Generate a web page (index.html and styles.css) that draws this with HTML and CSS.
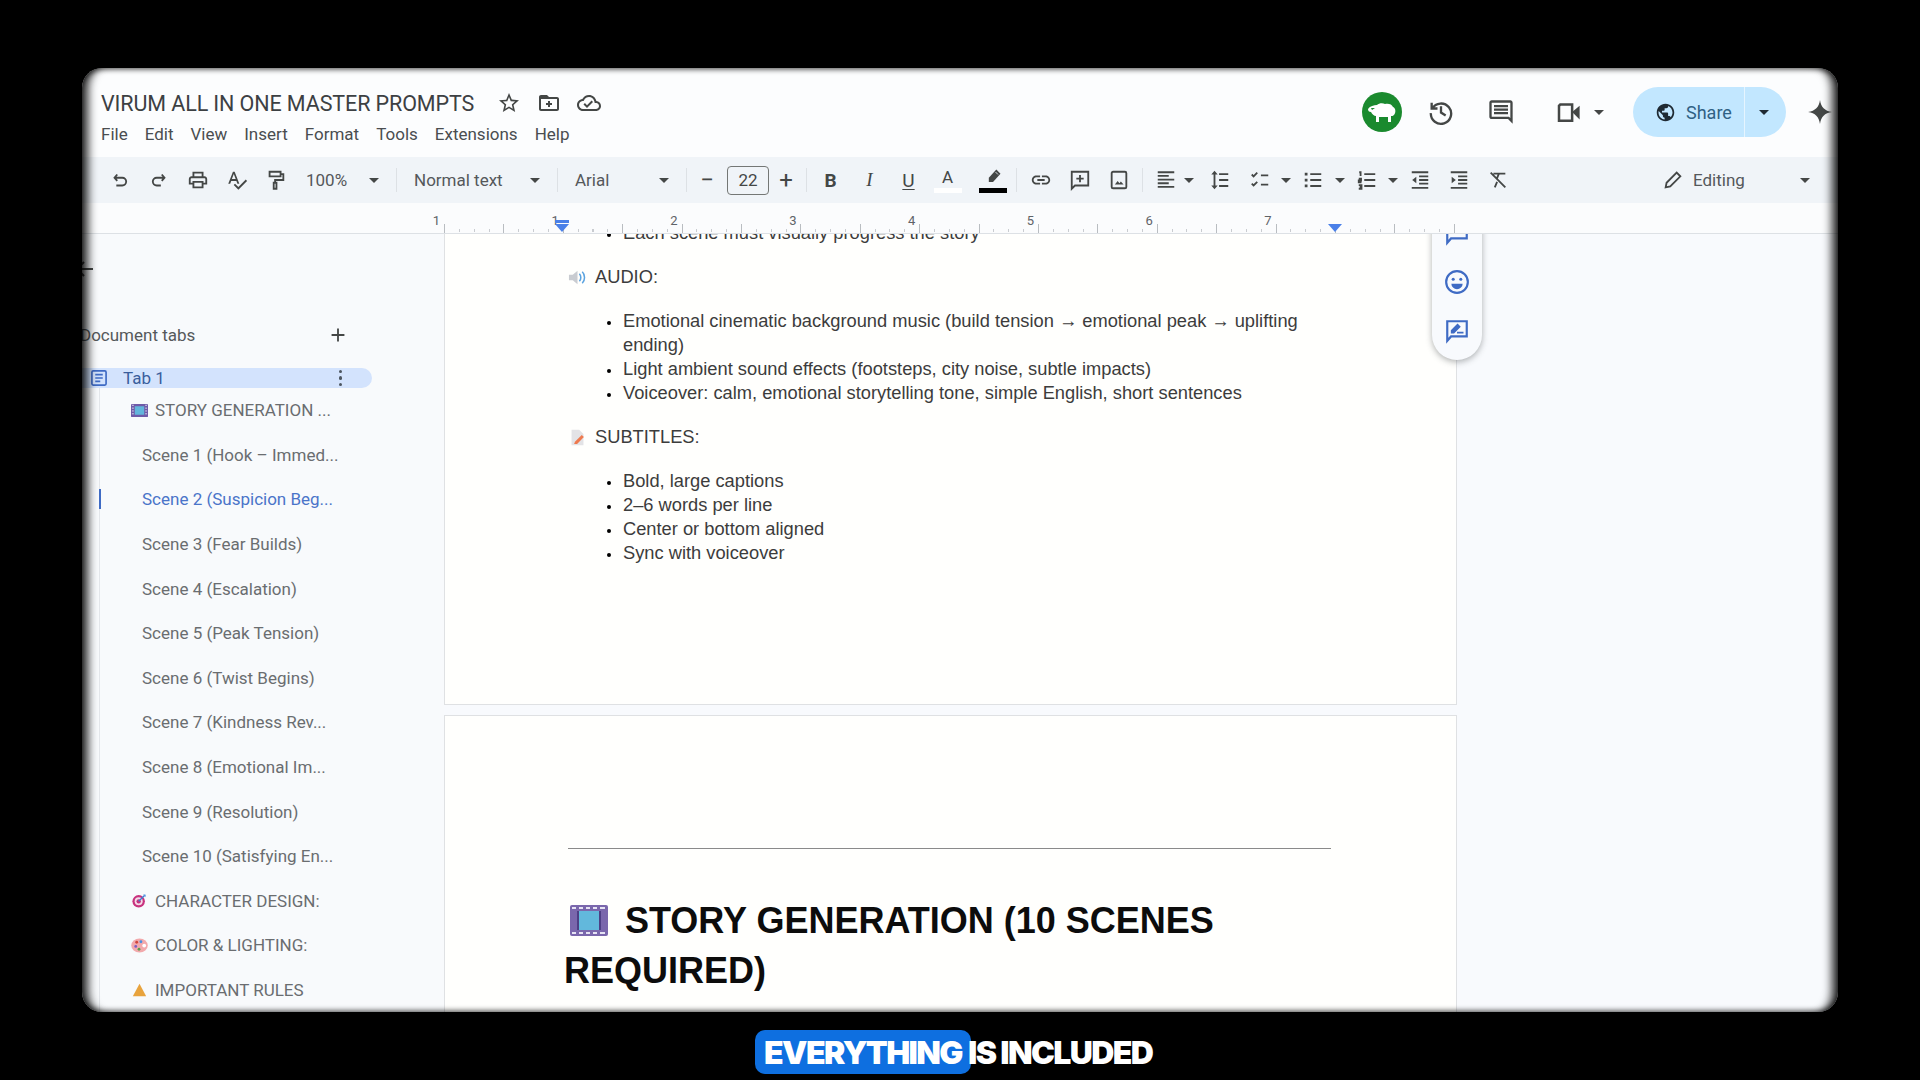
FILE: index.html
```html
<!DOCTYPE html>
<html lang="en">
<head>
  <meta charset="UTF-8" />
  <title>VIRUM ALL IN ONE MASTER PROMPTS</title>
  <link rel="stylesheet" href="styles.css">
</head>
<body>
  <div class="frame">
    <!-- title + menus -->
    <header class="head">
      <div class="head-left">
        <div class="title-row">
          <span class="doc-title">VIRUM ALL IN ONE MASTER PROMPTS</span>
          <svg class="ic title-ic" viewBox="0 0 24 24"><path class="f" d="M22 9.24l-7.19-.62L12 2 9.19 8.63 2 9.24l5.46 4.73L5.82 21 12 17.27 18.18 21l-1.63-7.03L22 9.24zM12 15.4l-3.76 2.27 1-4.28-3.32-2.88 4.38-.38L12 6.1l1.71 4.04 4.38.38-3.32 2.88 1 4.28L12 15.4z"/></svg>
          <svg class="ic title-ic" viewBox="0 0 24 24"><path class="f" d="M20 6h-8l-2-2H4c-1.11 0-1.99.89-1.99 2L2 18c0 1.11.89 2 2 2h16c1.11 0 2-.89 2-2V8c0-1.11-.89-2-2-2zm0 12H4V8h16v10z"/><path class="f" d="M11 10h2v2h2v2h-2v2h-2v-2H9v-2h2z"/></svg>
          <svg class="ic title-ic" viewBox="0 0 24 24"><path class="f" d="M19.35 10.04C18.67 6.59 15.64 4 12 4 9.11 4 6.6 5.64 5.35 8.04 2.34 8.36 0 10.91 0 14c0 3.31 2.69 6 6 6h13c2.76 0 5-2.24 5-5 0-2.64-2.05-4.78-4.65-4.96zM19 18H6c-2.21 0-4-1.79-4-4 0-2.05 1.53-3.76 3.56-3.97l1.07-.11.5-.95C8.08 7.14 9.94 6 12 6c2.62 0 4.88 1.86 5.39 4.43l.3 1.5 1.53.11c1.56.1 2.78 1.41 2.78 2.96 0 1.65-1.35 3-3 3zm-9-3.82l-2.09-2.09L6.5 13.5 10 17l6.01-6.01-1.41-1.41z"/></svg>
        </div>
        <nav class="menu">
          <span>File</span><span>Edit</span><span>View</span><span>Insert</span><span>Format</span><span>Tools</span><span>Extensions</span><span>Help</span>
        </nav>
      </div>
      <div class="head-right">
        <div class="avatar">
          <svg viewBox="0 0 40 40"><path fill="#fff" d="M6 17c2-3 6-4 9-4 2-2 6-2 8-1 3-1 7 0 8 3 3 1 3 6 1 8-1 1-2 1-3 1v6h-3v-5h-9v5h-3v-6c-2 0-4-2-5-4-2 0-3-1-3-3z"/><path fill="#1a8a2e" d="M9 16h4l-3 2z"/></svg>
        </div>
        <svg class="ic head-ic ic-history" viewBox="0 0 24 24"><path class="s" d="M4 4v5h5M4.5 9A8.7 8.7 0 1 1 3.3 13M12 7v5.5l4 2.5"/></svg>
        <svg class="ic head-ic ic-chat" viewBox="0 0 24 24"><path class="f" d="M21.99 4c0-1.1-.89-2-1.99-2H4c-1.1 0-2 .9-2 2v12c0 1.1.9 2 2 2h14l4 4-.01-18zM20 4v13.17L18.83 16H4V4h16zM6 12h12v2H6zm0-3h12v2H6zm0-3h12v2H6z"/></svg>
        <svg class="ic head-ic ic-video" viewBox="0 0 24 24"><path class="s" d="M5 6h9.5v13H4V7z"/><path class="f" d="M14.5 12l6-5v11z"/></svg>
        <span class="caret meet-caret"></span>
        <div class="share">
          <div class="share-main">
            <svg class="ic globe" viewBox="0 0 24 24"><path fill="#1f2a33" d="M12 2C6.48 2 2 6.48 2 12s4.48 10 10 10 10-4.48 10-10S17.52 2 12 2zm-1 17.93c-3.95-.49-7-3.85-7-7.93 0-.62.08-1.21.21-1.79L9 15v1c0 1.1.9 2 2 2v1.93zm6.9-2.54c-.26-.81-1-1.39-1.9-1.39h-1v-3c0-.55-.45-1-1-1H8v-2h2c.55 0 1-.45 1-1V7h2c1.1 0 2-.9 2-2v-.41c2.93 1.19 5 4.06 5 7.41 0 2.08-.8 3.97-2.1 5.39z"/></svg>
            Share
          </div>
          <div class="share-more"><span class="caret dark"></span></div>
        </div>
        <svg class="ic spark" viewBox="0 0 24 24"><path class="f" d="M12 1c.9 6.6 4.4 10.100 11 11-6.600.9-10.100 4.400-11 11-.9-6.600-4.400-10.100-11-11 6.600-.9 10.100-4.400 11-11z"/></svg>
      </div>
    </header>

    <!-- toolbar -->
    <div class="toolbar">
      <span class="btn"><svg class="ic" viewBox="0 0 24 24"><path class="s" d="M9 6L6 9.500 9 13M6 9.500h8.500a4 4 0 0 1 0 8.500H8"/></svg></span>
      <span class="btn"><svg class="ic" viewBox="0 0 24 24"><path class="s" d="M15 6l3 3.500L15 13M18 9.500H9.500a4 4 0 0 0 0 8.500H14"/></svg></span>
      <span class="btn"><svg class="ic" viewBox="0 0 24 24"><path class="f" d="M19 8h-1V3H6v5H5c-1.660 0-3 1.340-3 3v6h4v4h12v-4h4v-6c0-1.660-1.340-3-3-3zM8 5h8v3H8V5zm8 12v2H8v-4h8v2zm2-2v-2H6v2H4v-4c0-.55.45-1 1-1h14c.55 0 1 .45 1 1v4h-2z"/></svg></span>
      <span class="btn"><svg class="ic" viewBox="0 0 24 24"><path class="f" d="M12.450 16h2.090L9.430 3H7.570L2.460 16h2.090l1.120-3h5.640l1.140 3zm-6.020-5L8.500 5.480 10.570 11H6.430zm15.160.59l-8.090 8.090L9.830 16l-1.410 1.410 5.090 5.090L23 13l-1.410-1.410z"/></svg></span>
      <span class="btn"><svg class="ic" viewBox="0 0 24 24"><path class="s" d="M5 3h12v5H5zM17 5.500h3V12h-9v3M9.500 15h3v6.500h-3z"/></svg></span>
      <span class="sel sel-zoom"><span>100%</span><span class="caret"></span></span>
      <span class="sep"></span>
      <span class="sel sel-style"><span>Normal text</span><span class="caret"></span></span>
      <span class="sep"></span>
      <span class="sel sel-font"><span>Arial</span><span class="caret"></span></span>
      <span class="sep"></span>
      <span class="btn w32 sign">−</span>
      <span class="size-box">22</span>
      <span class="btn w32 sign">+</span>
      <span class="sep"></span>
      <span class="btn fmt fmt-b">B</span>
      <span class="btn fmt fmt-i">I</span>
      <span class="btn fmt fmt-u">U</span>
      <span class="btn color-btn"><span class="fmt-a">A</span><span class="swatch white"></span></span>
      <span class="btn color-btn hl"><svg class="ic pen" viewBox="0 0 24 24"><path class="f" d="M16 3l5 5-9 10H7v-5z"/><path d="M15 6l3 3" stroke="#f0f4f8" stroke-width="1"/></svg><span class="swatch black"></span></span>
      <span class="sep"></span>
      <span class="btn"><svg class="ic" viewBox="0 0 24 24"><path class="f" d="M3.900 12c0-1.710 1.390-3.100 3.100-3.100h4V7H7c-2.760 0-5 2.240-5 5s2.240 5 5 5h4v-1.900H7c-1.710 0-3.100-1.390-3.100-3.100zM8 13h8v-2H8v2zm9-6h-4v1.900h4c1.710 0 3.100 1.390 3.100 3.100s-1.390 3.100-3.100 3.100h-4V17h4c2.760 0 5-2.240 5-5s-2.240-5-5-5z"/></svg></span>
      <span class="btn"><svg class="ic" viewBox="0 0 24 24"><path class="s" d="M3 3h18v15H6.500L3 21.500zM12 6.500v8M8 10.500h8"/></svg></span>
      <span class="btn"><svg class="ic" viewBox="0 0 24 24"><path class="s" d="M5.500 3h13a1.500 1.500 0 0 1 1.500 1.500v15a1.500 1.500 0 0 1-1.500 1.500h-13A1.500 1.500 0 0 1 4 19.500v-15A1.500 1.500 0 0 1 5.500 3z"/><path class="f" d="M7.500 17l3-4 2 2.500 1.500-2 3 3.500z"/></svg></span>
      <span class="sep"></span>
      <span class="btn w38"><svg class="ic" viewBox="0 0 24 24"><path class="s" d="M3 3.500h18M3 7.500h12M3 11.500h18M3 15.500h12M3 19.500h18"/></svg></span>
      <span class="caret tb-caret"></span>
      <span class="btn line-sp"><svg class="ic" viewBox="0 0 24 24"><path class="s" d="M11 5.500h10M11 12h10M11 18.500h10M6 5v14"/><path class="f" d="M6 2l3.500 4h-7zM6 22l3.500-4h-7z"/></svg></span>
      <span class="btn w42"><svg class="ic" viewBox="0 0 24 24"><path class="s" d="M3 6l2 2 4-4M3 16l2 2 4-4M13 7h8M13 17h8"/></svg></span>
      <span class="caret tb-caret c10"></span>
      <span class="btn w44"><svg class="ic" viewBox="0 0 24 24"><path class="s" d="M9 5.500h12M9 12h12M9 18.500h12"/><path class="f" d="M3 4h3v3H3zM3 10.500h3v3H3zM3 17h3v3H3z"/></svg></span>
      <span class="caret tb-caret c10"></span>
      <span class="btn w44"><svg class="ic" viewBox="0 0 24 24"><path class="s" d="M9 5.500h12M9 12h12M9 18.500h12M3.500 3.500h1.500v4M3 10.500h2.500v2H3v2h3M3 17.500h3v4H3M4 19.500h2"/></svg></span>
      <span class="caret tb-caret"></span>
      <span class="btn w46"><svg class="ic" viewBox="0 0 24 24"><path class="s" d="M3 3.500h18M11 8h10M11 12h10M11 16h10M3 20.500h18"/><path class="f" d="M8 8.500v7L3.500 12z"/></svg></span>
      <span class="btn w32"><svg class="ic" viewBox="0 0 24 24"><path class="s" d="M3 3.500h18M11 8h10M11 12h10M11 16h10M3 20.500h18"/><path class="f" d="M4 8.500v7L8.500 12z"/></svg></span>
      <span class="btn w46"><svg class="ic" viewBox="0 0 24 24"><path class="s" d="M4 4l16 16M7 5h13M13 5l-2 5M11 14l-2.500 6"/></svg></span>
      <span class="editing">
        <svg class="ic" viewBox="0 0 24 24"><path class="s" d="M4 20l1-5L16 4l4 4L9 19z"/></svg>
        <span class="editing-text">Editing</span>
        <span class="caret"></span>
      </span>
    </div>

    <!-- ruler -->
    <div class="ruler">
      <div class="ruler-nums">
        <span>1</span><span class="zero"></span><span>1</span><span>2</span><span>3</span><span>4</span><span>5</span><span>6</span><span>7</span>
      </div>
      <div class="ticks"></div>
      <span class="marker marker-left"></span>
      <span class="marker marker-right"></span>
    </div>

    <div class="main">
      <aside class="sidebar">
        <svg class="ic back" viewBox="0 0 24 24"><path class="s" d="M20 12H4M11 5l-7 7 7 7"/></svg>
        <div class="tabs-head">
          <span>Document tabs</span>
          <svg class="ic" viewBox="0 0 24 24"><path class="s" d="M12 5v14M5 12h14"/></svg>
        </div>
        <div class="tab-pill">
          <svg class="ic tab-doc" viewBox="0 0 24 24"><path class="b" d="M5 3.500h14A1.500 1.500 0 0 1 20.500 5v14a1.500 1.500 0 0 1-1.500 1.500H5A1.500 1.500 0 0 1 3.500 19V5A1.500 1.500 0 0 1 5 3.500zM7.500 8h9M7.500 12h9M7.500 16h6"/></svg>
          <span class="tab-name">Tab 1</span>
          <span class="dots"><i></i><i></i><i></i></span>
        </div>
        <ul class="outline">
          <li class="lvl1">
            <svg class="emoji" viewBox="0 0 18 14"><rect width="18" height="14" rx="1" fill="#6f5aa8"/><rect x="4" y="2.500" width="10" height="9" fill="#62b5dc"/><path d="M1 1.500h2M1 4.500h2M1 7.500h2M1 10.500h2M15 1.500h2M15 4.500h2M15 7.500h2M15 10.500h2" stroke="#d9d6ee"/></svg>
            STORY GENERATION ...
          </li>
          <li>Scene 1 (Hook – Immed...</li>
          <li class="active">Scene 2 (Suspicion Beg...</li>
          <li>Scene 3 (Fear Builds)</li>
          <li>Scene 4 (Escalation)</li>
          <li>Scene 5 (Peak Tension)</li>
          <li>Scene 6 (Twist Begins)</li>
          <li>Scene 7 (Kindness Rev...</li>
          <li>Scene 8 (Emotional Im...</li>
          <li>Scene 9 (Resolution)</li>
          <li>Scene 10 (Satisfying En...</li>
          <li class="lvl1">
            <svg class="emoji" viewBox="0 0 18 18"><circle cx="8" cy="10" r="7.500" fill="#c8327e"/><circle cx="8" cy="10" r="4.800" fill="#f3d9e6"/><circle cx="8" cy="10" r="2.600" fill="#c8327e"/><path d="M8 10L15 3" stroke="#3f7fd0" stroke-width="1.600"/><path d="M13.500 1.500l3 .5-.5 3z" fill="#4a90e2"/></svg>
            CHARACTER DESIGN:
          </li>
          <li class="lvl1">
            <svg class="emoji" viewBox="0 0 18 16"><ellipse cx="9" cy="8" rx="8.800" ry="7.500" fill="#f2a9ac"/><circle cx="6" cy="4.500" r="1.500" fill="#d0453c"/><circle cx="10.500" cy="4" r="1.500" fill="#4a90e2"/><circle cx="5" cy="9" r="1.500" fill="#7c5cc4"/><circle cx="8.500" cy="12" r="1.500" fill="#5a9c50"/><circle cx="14" cy="8" r="2" fill="#fff"/></svg>
            COLOR &amp; LIGHTING:
          </li>
          <li class="lvl1">
            <svg class="emoji" viewBox="0 0 18 18"><path d="M9 1l8 15H1z" fill="#e8a33d"/></svg>
            IMPORTANT RULES
          </li>
        </ul>
      </aside>

      <section class="doc">
        <div class="page page-one">
          <ul class="bullets cut-top">
            <li>Each scene must visually progress the story</li>
          </ul>
          <p class="sect">
            <svg class="sect-ic" viewBox="0 0 20 16"><path d="M1 5h4l5-4v14l-5-4H1z" fill="#c9ccd1"/><path d="M12 4c2 2 2 6 0 8M15 2c3.200 3 3.200 9 0 12" fill="none" stroke="#5aa3e0" stroke-width="1.600"/></svg>
            AUDIO:
          </p>
          <ul class="bullets">
            <li>Emotional cinematic background music (build tension → emotional peak → uplifting ending)</li>
            <li>Light ambient sound effects (footsteps, city noise, subtle impacts)</li>
            <li>Voiceover: calm, emotional storytelling tone, simple English, short sentences</li>
          </ul>
          <p class="sect">
            <svg class="sect-ic" viewBox="0 0 20 20"><path d="M3 1h9l5 5v13H3z" fill="#e3e3e6"/><path d="M7 15l8-8 2.500 2.500-8 8H6z" fill="#ee7a4f"/></svg>
            SUBTITLES:
          </p>
          <ul class="bullets">
            <li>Bold, large captions</li>
            <li>2–6 words per line</li>
            <li>Center or bottom aligned</li>
            <li>Sync with voiceover</li>
          </ul>
        </div>
        <div class="page page-two">
          <hr class="rule">
          <h1 class="doc-h1">
            <svg class="h1-ic" viewBox="0 0 38 31"><rect width="38" height="31" rx="2" fill="#7a67ac"/><rect x="8" y="6" width="22" height="19" fill="#62b8dc"/><path d="M2 3h4M9 3h4M16 3h4M23 3h4M30 3h5M2 28h4M9 28h4M16 28h4M23 28h4M30 28h5" stroke="#e6e3f3" stroke-width="2"/><path d="M8 6v19M30 6v19" stroke="#4e3f85" stroke-width="2"/></svg>STORY GENERATION (10 SCENES REQUIRED)
          </h1>
        </div>

        <div class="palette">
          <svg class="ic pal-ic" viewBox="0 0 24 24"><path class="b" d="M3 3h18v14H6.500L3 21z"/></svg>
          <svg class="ic pal-ic" viewBox="0 0 24 24"><circle class="b" cx="12" cy="12" r="10"/><circle cx="8.500" cy="9.500" r="1.400" fill="#3f6bc4"/><circle cx="15.500" cy="9.500" r="1.400" fill="#3f6bc4"/><path d="M6.800 13.500h10.400a5.200 5.200 0 0 1-10.400 0z" fill="#3f6bc4"/></svg>
          <svg class="ic pal-ic" viewBox="0 0 24 24"><path class="b" d="M3 3h18v14H6.500L3 21z"/><path d="M7 13.500v-2L12.500 6l2 2L9 13.500zM12 13.500h6" fill="#3f6bc4" stroke="#3f6bc4" stroke-width="1.400"/></svg>
        </div>
      </section>
    </div>

    <div class="vignette"></div>
  </div>

  <div class="caption">
    <span class="cap-hl">EVERYTHING</span><span class="cap-rest">IS INCLUDED</span>
  </div>
</body>
</html>
```
FILE: styles.css
```css
:root {
  --ink: #444746;
  --grey: #5f6368;
  --blue: #3f6bc4;
  --chrome: #fcfdfe;
  --tool: #f0f4f8;
  --side: #f8fafc;
}

* {
  box-sizing: border-box;
}

html, body {
  height: 100%;
}

body {
  margin: 0;
  background: #000;
  overflow: hidden;
  font-family: Roboto, "Liberation Sans", sans-serif;
  color: var(--ink);
}

.frame {
  position: relative;
  width: 1756px;
  height: 944px;
  margin: 68px 0 0 82px;
  background: var(--chrome);
  display: flex;
  flex-direction: column;
  overflow: hidden;
}

/* soft video edge round the window */
.vignette {
  position: absolute;
  inset: 0;
  border-radius: 20px;
  pointer-events: none;
  box-shadow: 0 0 0 24px #000,
    inset 14px 0 10px -8px rgba(0, 0, 0, 0.85),
    inset -14px 0 10px -8px rgba(0, 0, 0, 0.85),
    inset 0 4px 5px -2px rgba(0, 0, 0, 0.55),
    inset 0 -4px 5px -2px rgba(0, 0, 0, 0.55);
  z-index: 5;
}

/* shared icon bits */
.ic {
  width: 22px;
  height: 22px;
  flex: none;
  display: block;
}
.f {
  fill: var(--ink);
}
.s {
  fill: none;
  stroke: var(--ink);
  stroke-width: 2;
}
.b {
  fill: none;
  stroke: var(--blue);
  stroke-width: 2;
}

.caret {
  display: inline-block;
  width: 0;
  height: 0;
  border-left: 5px solid transparent;
  border-right: 5px solid transparent;
  border-top: 5px solid var(--ink);
  flex: none;
}
.caret.dark {
  border-top-color: #1f2a33;
}

/* --- header --- */
.head {
  height: 89px;
  flex: none;
  display: flex;
  justify-content: space-between;
  padding: 21px 0 0 19px;
}
.title-row {
  display: flex;
  align-items: center;
  height: 28px;
}
.doc-title {
  font-size: 21.5px;
  letter-spacing: -0.1px;
  color: #3c4043;
  width: 396px;
}
.title-ic {
  width: 24px;
  height: 24px;
  margin-right: 16px;
}
.menu {
  display: flex;
  gap: 17px;
  margin-top: 5px;
  font-size: 17px;
  line-height: 24px;
  color: #4a4d50;
}

.head-right {
  display: flex;
  align-items: center;
  height: 50px;
  margin-top: -2px;
  padding-right: 5px;
}
.avatar {
  width: 40px;
  height: 40px;
  border-radius: 50%;
  background: #1a8a2e;
  margin-right: 25px;
}
.avatar svg {
  display: block;
}
.head-ic {
  width: 28px;
  height: 28px;
}
.ic-history {
  margin-right: 32px;
}
.ic-chat {
  margin-right: 39px;
}
.ic-video {
  width: 30px;
  height: 30px;
}
.meet-caret {
  margin: 0 29px 0 10px;
}
.share {
  display: flex;
  width: 153px;
  height: 50px;
  background: #c2e7ff;
  border-radius: 25px;
  margin-right: 21px;
}
.share-main {
  width: 112px;
  display: flex;
  align-items: center;
  gap: 10px;
  padding-left: 22px;
  font-size: 18px;
  color: #2f6184;
  border-right: 1px solid #e6f5ff;
}
.globe {
  width: 21px;
  height: 21px;
}
.share-more {
  flex: 1;
  display: flex;
  align-items: center;
  justify-content: center;
  padding-right: 4px;
}
.spark {
  width: 26px;
  height: 26px;
}

/* --- toolbar --- */
.toolbar {
  height: 46px;
  flex: none;
  display: flex;
  align-items: center;
  padding: 0 28px 0 18px;
  background: var(--tool);
}
.btn {
  width: 39px;
  height: 30px;
  flex: none;
  display: flex;
  align-items: center;
  justify-content: center;
}
.w32 { width: 32px; }
.w38 { width: 38px; }
.w42 { width: 42px; }
.w44 { width: 44px; }
.w46 { width: 46px; }

.sel {
  display: flex;
  align-items: center;
  justify-content: space-between;
  margin: 0 13px;
  font-size: 17px;
  color: #55585b;
  flex: none;
}
.sel-zoom {
  width: 73px;
  margin-left: 11px;
}
.sel-style {
  width: 126px;
}
.sel-font {
  width: 94px;
}
.sep {
  width: 1px;
  height: 24px;
  background: #dde1e5;
  margin: 0 4px;
  flex: none;
}
.sign {
  font-size: 24px;
  color: var(--ink);
}
.size-box {
  width: 42px;
  height: 29px;
  margin-left: 4px;
  margin-right: 1px;
  border: 1px solid #747775;
  border-radius: 4px;
  display: flex;
  align-items: center;
  justify-content: center;
  font-size: 17px;
  flex: none;
}
.fmt {
  font-size: 19px;
  font-family: Roboto, sans-serif;
}
.fmt-b {
  font-weight: 700;
}
.fmt-i {
  font-style: italic;
  font-weight: 500;
  font-family: "Liberation Serif", serif;
}
.fmt-u {
  text-decoration: underline;
  text-underline-offset: 2px;
}
.color-btn {
  flex-direction: column;
  gap: 1px;
}
.fmt-a {
  font-size: 17px;
  line-height: 20px;
}
.swatch {
  width: 28px;
  height: 5px;
}
.swatch.white {
  background: #fff;
}
.swatch.black {
  background: #000;
}
.hl {
  margin-left: 6px;
}
.pen {
  width: 20px;
  height: 20px;
}
.tb-caret {
  margin: 0 -1px;
}
.tb-caret.c10 {
  margin: 0;
}
.line-sp {
  margin-left: 7px;
}
.editing {
  margin-left: auto;
  display: flex;
  align-items: center;
  width: 148px;
  font-size: 17px;
  color: #55585b;
}
.editing-text {
  margin-left: 9px;
  flex: 1;
}

/* --- ruler --- */
.ruler {
  position: relative;
  height: 31px;
  flex: none;
  background: #fbfcfd;
  border-bottom: 1px solid #dde1e5;
}
.ruler-nums {
  display: flex;
  padding: 10px 0 0 295px;
  font-size: 13px;
  line-height: 16px;
  color: #5f6368;
}
.ruler-nums span {
  width: 118.8px;
  text-align: center;
}
.ruler-nums .zero {
  width: 0;
}
.ticks {
  position: absolute;
  left: 362px;
  bottom: 0;
  width: 1012px;
  height: 9px;
  background:
    repeating-linear-gradient(90deg, #b9bdc1 0 1px, transparent 1px 59.4px) 0 0 / 100% 9px no-repeat,
    repeating-linear-gradient(90deg, #c9ccd0 0 1px, transparent 1px 14.85px) 0 5px / 100% 3px no-repeat;
}
.marker {
  position: absolute;
  bottom: 1px;
  width: 0;
  height: 0;
  border-left: 7px solid transparent;
  border-right: 7px solid transparent;
  border-top: 8px solid #4a80e8;
}
.marker-left {
  left: 473px;
}
.marker-left::before {
  content: "";
  position: absolute;
  left: -7px;
  top: -12px;
  width: 14px;
  height: 3px;
  background: #4a80e8;
}
.marker-right {
  left: 1246px;
}

/* --- sidebar + pages --- */
.main {
  flex: 1;
  display: flex;
  min-height: 0;
}
.sidebar {
  width: 362px;
  flex: none;
  background: var(--side);
  overflow: hidden;
  display: flex;
  flex-direction: column;
}
.back {
  margin: 23px 0 0 -9px;
  width: 24px;
  height: 24px;
}
.tabs-head {
  display: flex;
  align-items: center;
  justify-content: space-between;
  margin: 42px 0 0 -2px;
  width: 269px;
  font-size: 17px;
  line-height: 24px;
  color: #55585b;
  padding-right: 0;
}
.tab-pill {
  width: 290px;
  height: 50px;
  margin-top: 21px;
  display: flex;
  align-items: center;
  padding-left: 7px;
  background: #d3e3fd;
  border-radius: 0 25px 25px 0;
  color: var(--blue);
  font-size: 17px;
}
.tab-doc {
  width: 20px;
  height: 20px;
}
.tab-name {
  margin-left: 14px;
  flex: 1;
  color: #3a5e9c;
}
.dots {
  display: flex;
  flex-direction: column;
  gap: 3px;
  margin-right: 30px;
}
.dots i {
  width: 3.5px;
  height: 3.5px;
  border-radius: 50%;
  background: #4c5560;
}
.outline {
  list-style: none;
  margin: 0 0 0 17px;
  padding: 0;
  border-left: 1px solid #e3e6ea;
  font-size: 17px;
  color: #6a6d70;
}
.outline li {
  position: relative;
  height: 44.6px;
  display: flex;
  align-items: center;
  padding-left: 42px;
  white-space: nowrap;
}
.outline .lvl1 {
  padding-left: 31px;
  gap: 7px;
}
.outline .active {
  color: #4a74c9;
}
.outline .active::before {
  content: "";
  position: absolute;
  left: -1px;
  top: 12px;
  width: 2px;
  height: 20px;
  background: var(--blue);
}
.emoji {
  width: 17px;
  height: 15px;
  flex: none;
}

.doc {
  position: relative;
  flex: 1;
  background: #f8fafd;
  overflow: hidden;
}
.page {
  width: 1013px;
  background: #fffffd;
  border: 1px solid #dfe1e3;
  font-family: "Liberation Sans", Arial, sans-serif;
  color: #3c3c3c;
  overflow: hidden;
}
.page-one {
  height: 471px;
  border-top: 0;
  padding: 0 120px;
  font-size: 18.3px;
  line-height: 24px;
}
.page-two {
  height: 400px;
  margin-top: 10px;
  padding: 132px 119px 0;
}
.bullets {
  margin: 20px 0;
  padding: 0 0 0 57px;
}
.cut-top {
  margin-top: -13px;
}
.bullets li {
  padding-left: 1px;
}
.bullets li::marker {
  color: #000;
  font-size: 14px;
}
.sect {
  margin: 20px 0;
  display: flex;
  align-items: center;
  gap: 8px;
  padding-left: 3px;
}
.sect-ic {
  width: 19px;
  height: 17px;
  flex: none;
}
.rule {
  margin: 0 0 0 4px;
  width: 763px;
  border: 0;
  border-top: 1px solid #8a8a8a;
}
.doc-h1 {
  margin: 47px 0 0;
  font-size: 36px;
  line-height: 50px;
  font-weight: 700;
  color: #0c0c0c;
}
.h1-ic {
  width: 38px;
  height: 31px;
  margin: 0 17px 0 6px;
  vertical-align: -3px;
}

/* comment palette hanging off the page edge */
.palette {
  position: absolute;
  left: 988px;
  top: -30px;
  width: 50px;
  height: 156px;
  padding: 16px 0;
  display: flex;
  flex-direction: column;
  align-items: center;
  gap: 23px;
  background: #f8fafd;
  border-radius: 25px;
  box-shadow: 0 2px 6px rgba(60, 64, 67, 0.4);
}
.pal-ic {
  width: 26px;
  height: 26px;
}

/* --- subtitle burned into the video --- */
.caption {
  height: 68px;
  padding: 12px 0 0 755px;
  display: flex;
  align-items: center;
  font-family: Inter, Roboto, sans-serif;
  font-weight: 900;
  font-size: 32px;
  letter-spacing: -1.6px;
  color: #fff;
}
.cap-hl {
  width: 216px;
  height: 44px;
  display: flex;
  align-items: center;
  justify-content: center;
  background: #0e6fe0;
  border-radius: 10px;
}
.cap-rest {
  margin-left: -3px;
}
```
